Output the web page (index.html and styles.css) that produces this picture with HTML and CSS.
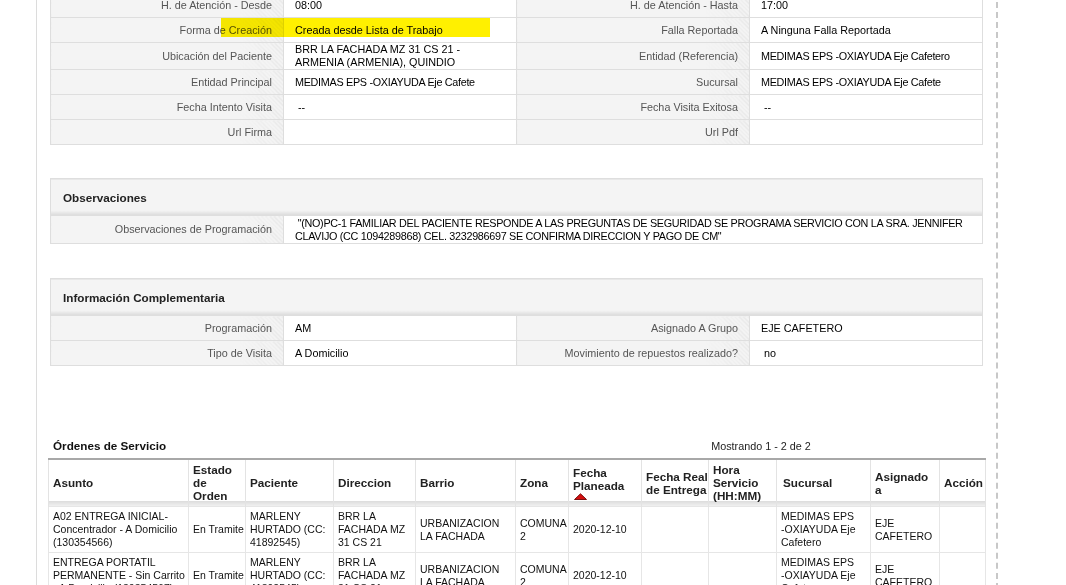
FILE: index.html
```html
<!DOCTYPE html>
<html lang="es">
<head>
  <meta charset="UTF-8">
  <meta name="viewport" content="width=device-width, initial-scale=1.0">
  <title>Detalle de Servicio</title>
  <link rel="stylesheet" href="styles.css">
</head>
<body>
  <div class="panel">
    <div class="detail-wrap">
      <table class="detail">
        <colgroup><col><col><col><col></colgroup>
        <tr>
          <td class="lbl">H. de Atención - Desde</td>
          <td>08:00</td>
          <td class="lbl">H. de Atención - Hasta</td>
          <td>17:00</td>
        </tr>
        <tr>
          <td class="lbl">Forma de Creación</td>
          <td>Creada desde Lista de Trabajo</td>
          <td class="lbl">Falla Reportada</td>
          <td>A Ninguna Falla Reportada</td>
        </tr>
        <tr>
          <td class="lbl">Ubicación del Paciente</td>
          <td>BRR LA FACHADA MZ 31 CS 21 - ARMENIA (ARMENIA), QUINDIO</td>
          <td class="lbl">Entidad (Referencia)</td>
          <td class="caps">MEDIMAS EPS -OXIAYUDA Eje Cafetero</td>
        </tr>
        <tr>
          <td class="lbl">Entidad Principal</td>
          <td class="caps">MEDIMAS EPS -OXIAYUDA Eje Cafete</td>
          <td class="lbl">Sucursal</td>
          <td class="caps">MEDIMAS EPS -OXIAYUDA Eje Cafete</td>
        </tr>
        <tr>
          <td class="lbl">Fecha Intento Visita</td>
          <td>&nbsp;--</td>
          <td class="lbl">Fecha Visita Exitosa</td>
          <td>&nbsp;--</td>
        </tr>
        <tr>
          <td class="lbl">Url Firma</td>
          <td></td>
          <td class="lbl">Url Pdf</td>
          <td></td>
        </tr>
      </table>
      <div class="marker"></div>
    </div>

    <table class="detail box">
      <colgroup><col><col><col><col></colgroup>
      <tr>
        <th colspan="4" class="box-title">Observaciones</th>
      </tr>
      <tr>
        <td class="lbl">Observaciones de Programación</td>
        <td colspan="3" class="obs caps">&nbsp;"(NO)PC-1 FAMILIAR DEL PACIENTE RESPONDE A LAS PREGUNTAS DE SEGURIDAD SE PROGRAMA SERVICIO CON LA SRA. JENNIFER CLAVIJO (CC 1094289868) CEL. 3232986697 SE CONFIRMA DIRECCION Y PAGO DE CM"</td>
      </tr>
    </table>

    <table class="detail box">
      <colgroup><col><col><col><col></colgroup>
      <tr>
        <th colspan="4" class="box-title">Información Complementaria</th>
      </tr>
      <tr>
        <td class="lbl">Programación</td>
        <td>AM</td>
        <td class="lbl">Asignado A Grupo</td>
        <td>EJE CAFETERO</td>
      </tr>
      <tr>
        <td class="lbl">Tipo de Visita</td>
        <td>A Domicilio</td>
        <td class="lbl">Movimiento de repuestos realizado?</td>
        <td>&nbsp;no</td>
      </tr>
    </table>

    <div class="orders">
      <div class="orders-head">
        <span class="orders-title">Órdenes de Servicio</span>
        <span class="orders-count">Mostrando 1 - 2 de 2</span>
      </div>
      <table class="grid">
        <colgroup>
          <col style="width:140px">
          <col style="width:57px">
          <col style="width:88px">
          <col style="width:82px">
          <col style="width:100px">
          <col style="width:53px">
          <col style="width:73px">
          <col style="width:67px">
          <col style="width:68px">
          <col style="width:94px">
          <col style="width:69px">
          <col style="width:46px">
        </colgroup>
        <thead>
          <tr>
            <th>Asunto</th>
            <th>Estado<br>de<br>Orden</th>
            <th>Paciente</th>
            <th>Direccion</th>
            <th>Barrio</th>
            <th>Zona</th>
            <th>Fecha<br>Planeada
              <svg class="sort" width="13" height="7" viewBox="0 0 13 7"><path d="M0.5 6.5 L6.5 0.8 L12.5 6.5 Z" fill="#d40f0f" stroke="#7a1010" stroke-width="1"/></svg>
            </th>
            <th>Fecha Real<br>de Entrega</th>
            <th>Hora<br>Servicio<br>(HH:MM)</th>
            <th class="wide">Sucursal</th>
            <th>Asignado<br>a</th>
            <th>Acción</th>
          </tr>
        </thead>
        <tbody>
          <tr>
            <td>A02 ENTREGA INICIAL- Concentrador - A Domicilio (130354566)</td>
            <td class="nowrap">En Tramite</td>
            <td>MARLENY HURTADO (CC: 41892545)</td>
            <td>BRR LA FACHADA MZ 31 CS 21</td>
            <td>URBANIZACION LA FACHADA</td>
            <td>COMUNA 2</td>
            <td>2020-12-10</td>
            <td></td>
            <td></td>
            <td>MEDIMAS EPS <span class="nowrap">-OXIAYUDA</span> Eje Cafetero</td>
            <td>EJE CAFETERO</td>
            <td></td>
          </tr>
          <tr>
            <td>ENTREGA PORTATIL PERMANENTE - Sin Carrito - A Domicilio (130354567)</td>
            <td class="nowrap">En Tramite</td>
            <td>MARLENY HURTADO (CC: 41892545)</td>
            <td>BRR LA FACHADA MZ 31 CS 21</td>
            <td>URBANIZACION LA FACHADA</td>
            <td>COMUNA 2</td>
            <td>2020-12-10</td>
            <td></td>
            <td></td>
            <td>MEDIMAS EPS <span class="nowrap">-OXIAYUDA</span> Eje Cafetero</td>
            <td>EJE CAFETERO</td>
            <td></td>
          </tr>
        </tbody>
      </table>
    </div>
  </div>
</body>
</html>
```

FILE: styles.css
```css
body {
  margin: 0;
  font-family: "Liberation Sans", Arial, sans-serif;
  font-size: 10.8px;
  color: #000;
  background: #fff;
}
.panel {
  width: 933px;
  margin: -8px 0 0 36px;
  padding: 0 13px 60px 13px;
  border-left: 1px solid #dcdcdc;
  border-right: 2px dashed #c8c8c8;
}
.detail-wrap {
  position: relative;
}
.detail {
  width: 100%;
  border-collapse: collapse;
  table-layout: fixed;
}
.detail col {
  width: 25%;
}
.detail td {
  border: 1px solid #dedede;
  height: 24px;
  padding: 0 11px;
  line-height: 13px;
  vertical-align: middle;
}
.detail .lbl {
  text-align: right;
  color: #555;
  background:
    linear-gradient(to right, #f4f4f4 0, #f4f4f4 calc(100% - 45px), rgba(244,244,244,0) 100%),
    repeating-linear-gradient(45deg, #f4f4f4 0 2px, #e6e6e6 2px 3px);
}
.detail .caps {
  letter-spacing: -0.3px;
}
.detail .obs {
  padding-top: 1px;
  padding-bottom: 0;
}
.marker {
  position: absolute;
  left: 171px;
  top: 26px;
  width: 269px;
  height: 19px;
  background: #fff000;
  mix-blend-mode: multiply;
}
.box {
  margin-top: 33px;
}
.box + .box {
  margin-top: 34px;
}
.box-title {
  height: 36px;
  padding: 0 12px;
  text-align: left;
  font-size: 11.7px;
  font-weight: bold;
  color: #222;
  border: 1px solid #dedede;
  background: linear-gradient(to bottom, #f4f4f4 0, #f4f4f4 calc(100% - 5px), #d9d9d9 100%);
}
.orders {
  margin-top: 73px;
}
.orders-head {
  display: flex;
  align-items: center;
  padding: 0 0 5px 3px;
  line-height: 14px;
}
.orders-title {
  flex: 1;
  font-size: 11.7px;
  font-weight: bold;
  color: #111;
}
.orders-count {
  width: 200px;
  margin-right: 122px;
  text-align: center;
  color: #222;
}
.grid {
  width: calc(100% + 4px);
  margin-left: -2px;
  border-collapse: collapse;
  table-layout: fixed;
  border-top: 2px solid #a8a8a8;
}
.grid th {
  padding: 3px 1px 4px 4px;
  text-align: left;
  vertical-align: middle;
  white-space: nowrap;
  font-size: 11.7px;
  line-height: 13px;
  font-weight: bold;
  color: #222;
  border-left: 1px solid #e3e3e3;
  border-right: 1px solid #e3e3e3;
  background: linear-gradient(to bottom, #fff 0, #fff calc(100% - 5px), #dcdcdc calc(100% - 5px), #f0f0f0 100%);
}
.grid th.wide {
  padding-left: 6px;
}
.grid .sort {
  display: block;
  margin: 1px 0 0 1px;
}
.grid td {
  padding: 3px 1px 3px 4px;
  font-size: 10.5px;
  line-height: 13px;
  vertical-align: middle;
  border: 1px solid #e6e6e6;
  color: #111;
}
.grid .nowrap {
  white-space: nowrap;
}
```
